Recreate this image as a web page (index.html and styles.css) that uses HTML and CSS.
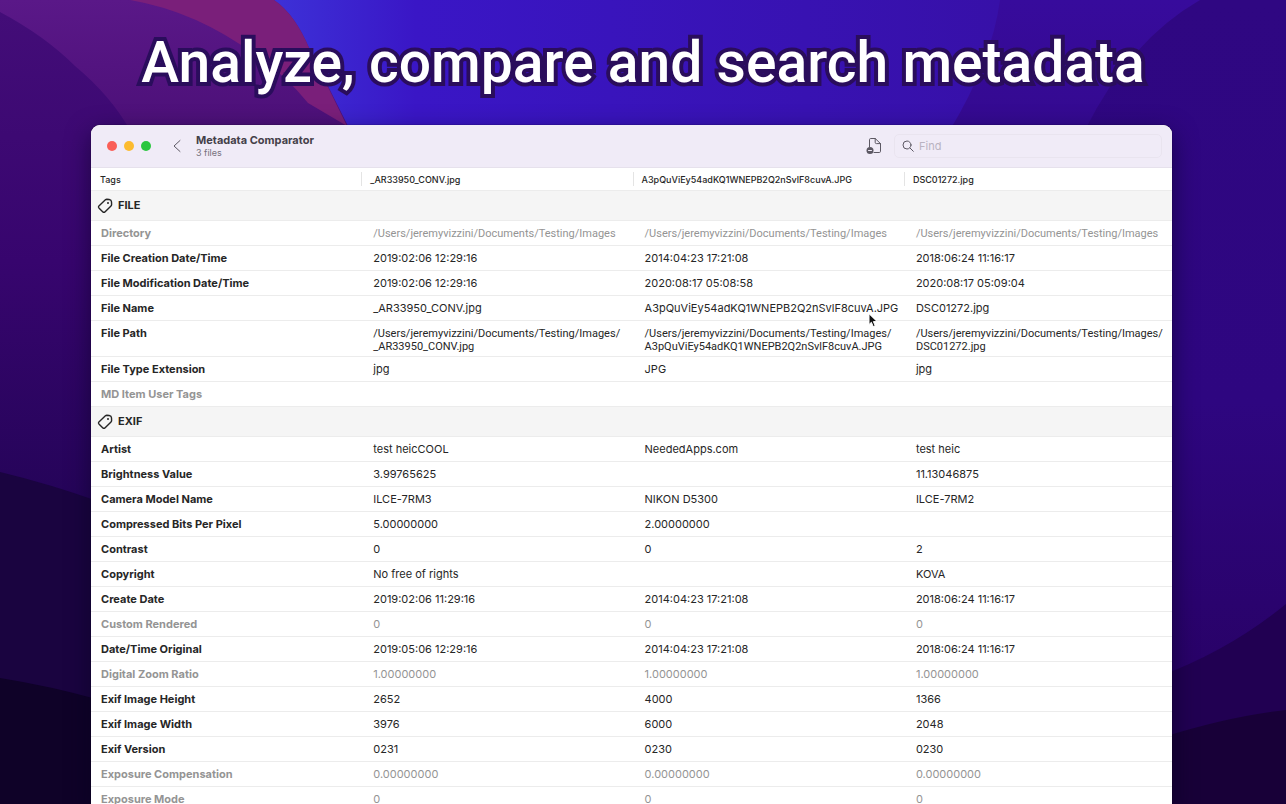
FILE: index.html
```
<!DOCTYPE html>
<html lang="en">

<head>
    <meta charset="UTF-8">
    <title>Metadata Comparator</title>
    <link rel="stylesheet" href="styles.css">
</head>

<body>
    <svg class="wallpaper" viewBox="0 0 1286 804" preserveAspectRatio="none" aria-hidden="true">
        <defs>
            <linearGradient id="base" x1="0" y1="0" x2="0" y2="1">
                <stop offset="0" stop-color="#370b9c" />
                <stop offset="0.4" stop-color="#30087e" />
                <stop offset="0.8" stop-color="#25005a" />
                <stop offset="1" stop-color="#1a0040" />
            </linearGradient>
            <linearGradient id="blue" x1="0" y1="0" x2="1" y2="0">
                <stop offset="0" stop-color="#3d32d8" />
                <stop offset="0.2" stop-color="#3a16c6" />
                <stop offset="1" stop-color="#3710a8" />
            </linearGradient>
            <linearGradient id="purple" x1="0" y1="0" x2="0" y2="1">
                <stop offset="0" stop-color="#5a1888" />
                <stop offset="0.25" stop-color="#4c1078" />
                <stop offset="1" stop-color="#240458" />
            </linearGradient>
            <linearGradient id="left" x1="0" y1="0" x2="0" y2="1">
                <stop offset="0" stop-color="#430d78" />
                <stop offset="0.5" stop-color="#37056e" />
                <stop offset="1" stop-color="#240458" />
            </linearGradient>
            <linearGradient id="far" x1="0" y1="0" x2="0" y2="1">
                <stop offset="0" stop-color="#2f0782" />
                <stop offset="0.5" stop-color="#2e0680" />
                <stop offset="1" stop-color="#26005c" />
            </linearGradient>
        </defs>
        <rect width="1286" height="804" fill="url(#base)" />
        <path d="M270 0H1000Q992 60 950 130H340Z" fill="url(#blue)" />
        <path d="M1200 0Q1130 40 1085 130V804H1286V0Z" fill="url(#far)" />
        <path d="M0 0H274Q295 14 310 50L350 130V520H0Z" fill="url(#purple)" />
        <path d="M130 0H274Q295 14 310 50L347 126L308 103Q285 75 262 60Q200 12 130 0Z" fill="#7a1f7a" />
        <path d="M0 12Q45 36 75 66Q110 95 130 130V510H0Z" fill="url(#left)" />
        <path d="M0 472Q50 484 100 502V804H0Z" fill="#1a0440" />
        <path d="M0 678Q50 686 100 700V804H0Z" fill="#0f0228" />
        <path d="M1286 604Q1230 650 1160 676V804H1286Z" fill="#210052" />
        <path d="M1286 710Q1230 716 1160 738V804H1286Z" fill="#180038" />
    </svg>

    <h1 class="headline">Analyze, compare and search metadata</h1>

    <main class="window">
        <header class="toolbar">
            <div class="lights">
                <button class="light red" aria-label="Close"></button>
                <button class="light yellow" aria-label="Minimize"></button>
                <button class="light green" aria-label="Zoom"></button>
            </div>
            <button class="icon-button" aria-label="Back">
                <svg width="10" height="14" viewBox="0 0 10 14"><path d="M8 1.5L2 7l6 5.5" /></svg>
            </button>
            <div class="titles">
                <h2>Metadata Comparator</h2>
                <p>3 files</p>
            </div>
            <button class="icon-button" aria-label="Hide identical tags">
                <svg width="16" height="18" viewBox="0 0 16 18">
                    <path d="M3.5 10V2.7Q3.5 1.5 4.7 1.5H9.2L14.5 6.6V14.3Q14.5 15.5 13.3 15.5H8M9.2 1.5V5.4Q9.2 6.6 10.4 6.6H14.5" />
                    <circle class="dot" cx="4" cy="13.5" r="3.5" />
                    <path class="minus" d="M2.5 13.5h3" />
                </svg>
            </button>
            <label class="search">
                <svg width="12" height="12" viewBox="0 0 12 12"><circle cx="5" cy="5" r="4" /><path d="M8 8l3.3 3.3" /></svg>
                <input type="search" placeholder="Find" aria-label="Find">
            </label>
        </header>

        <table class="tags">
            <colgroup>
                <col class="col-tag">
                <col class="col-file">
                <col class="col-file">
                <col>
            </colgroup>
            <thead>
                <tr>
                    <th scope="col">Tags</th>
                    <th scope="col">_AR33950_CONV.jpg</th>
                    <th scope="col">A3pQuViEy54adKQ1WNEPB2Q2nSvlF8cuvA.JPG</th>
                    <th scope="col">DSC01272.jpg</th>
                </tr>
            </thead>
            <tbody>
                <tr class="group">
                    <th colspan="4" scope="rowgroup">
                        <div class="group-name">
                            <svg width="16" height="16" viewBox="0 0 16 16"><path d="M8.4 1.8Q9 1.3 9.8 1.3L12.2 1.5Q14.4 1.8 14.5 3.8L14.6 6.4Q14.6 7.3 14 7.9L7.9 13.9Q6.9 14.8 5.9 13.9L1.9 9.9Q1 8.9 1.9 7.9Z" /><circle class="hole" cx="11" cy="4.9" r="1" /></svg>
                            FILE
                        </div>
                    </th>
                </tr>
                <tr class="same path"><th scope="row">Directory</th><td>/Users/jeremyvizzini/Documents/Testing/Images</td><td>/Users/jeremyvizzini/Documents/Testing/Images</td><td>/Users/jeremyvizzini/Documents/Testing/Images</td></tr>
                <tr><th scope="row">File Creation Date/Time</th><td>2019:02:06 12:29:16</td><td>2014:04:23 17:21:08</td><td>2018:06:24 11:16:17</td></tr>
                <tr><th scope="row">File Modification Date/Time</th><td>2019:02:06 12:29:16</td><td>2020:08:17 05:08:58</td><td>2020:08:17 05:09:04</td></tr>
                <tr><th scope="row">File Name</th><td>_AR33950_CONV.jpg</td><td>A3pQuViEy54adKQ1WNEPB2Q2nSvlF8cuvA.JPG</td><td>DSC01272.jpg</td></tr>
                <tr class="path"><th scope="row">File Path</th><td>/Users/jeremyvizzini/Documents/Testing/Images/<br>_AR33950_CONV.jpg</td><td>/Users/jeremyvizzini/Documents/Testing/Images/<br>A3pQuViEy54adKQ1WNEPB2Q2nSvlF8cuvA.JPG</td><td>/Users/jeremyvizzini/Documents/Testing/Images/<br>DSC01272.jpg</td></tr>
                <tr><th scope="row">File Type Extension</th><td>jpg</td><td>JPG</td><td>jpg</td></tr>
                <tr class="same"><th scope="row">MD Item User Tags</th><td></td><td></td><td></td></tr>
            </tbody>
            <tbody>
                <tr class="group">
                    <th colspan="4" scope="rowgroup">
                        <div class="group-name">
                            <svg width="16" height="16" viewBox="0 0 16 16"><path d="M8.4 1.8Q9 1.3 9.8 1.3L12.2 1.5Q14.4 1.8 14.5 3.8L14.6 6.4Q14.6 7.3 14 7.9L7.9 13.9Q6.9 14.8 5.9 13.9L1.9 9.9Q1 8.9 1.9 7.9Z" /><circle class="hole" cx="11" cy="4.9" r="1" /></svg>
                            EXIF
                        </div>
                    </th>
                </tr>
                <tr><th scope="row">Artist</th><td>test heicCOOL</td><td>NeededApps.com</td><td>test heic</td></tr>
                <tr><th scope="row">Brightness Value</th><td>3.99765625</td><td></td><td>11.13046875</td></tr>
                <tr><th scope="row">Camera Model Name</th><td>ILCE-7RM3</td><td>NIKON D5300</td><td>ILCE-7RM2</td></tr>
                <tr><th scope="row">Compressed Bits Per Pixel</th><td>5.00000000</td><td>2.00000000</td><td></td></tr>
                <tr><th scope="row">Contrast</th><td>0</td><td>0</td><td>2</td></tr>
                <tr><th scope="row">Copyright</th><td>No free of rights</td><td></td><td>KOVA</td></tr>
                <tr><th scope="row">Create Date</th><td>2019:02:06 11:29:16</td><td>2014:04:23 17:21:08</td><td>2018:06:24 11:16:17</td></tr>
                <tr class="same"><th scope="row">Custom Rendered</th><td>0</td><td>0</td><td>0</td></tr>
                <tr><th scope="row">Date/Time Original</th><td>2019:05:06 12:29:16</td><td>2014:04:23 17:21:08</td><td>2018:06:24 11:16:17</td></tr>
                <tr class="same"><th scope="row">Digital Zoom Ratio</th><td>1.00000000</td><td>1.00000000</td><td>1.00000000</td></tr>
                <tr><th scope="row">Exif Image Height</th><td>2652</td><td>4000</td><td>1366</td></tr>
                <tr><th scope="row">Exif Image Width</th><td>3976</td><td>6000</td><td>2048</td></tr>
                <tr><th scope="row">Exif Version</th><td>0231</td><td>0230</td><td>0230</td></tr>
                <tr class="same"><th scope="row">Exposure Compensation</th><td>0.00000000</td><td>0.00000000</td><td>0.00000000</td></tr>
                <tr class="same"><th scope="row">Exposure Mode</th><td>0</td><td>0</td><td>0</td></tr>
            </tbody>
        </table>
    </main>

    <svg class="cursor" width="10" height="15" viewBox="0 0 10 15" aria-hidden="true">
        <path d="M1 1V11.5L3.4 9.3L5.2 13.6L7.2 12.7L5.4 8.6H8.8Z" />
    </svg>
</body>

</html>
```
FILE: styles.css
```
* {
    box-sizing: border-box;
}

body {
    margin: 0;
    height: 100vh;
    overflow: hidden;
    background: #2a0670;
    color: #262626;
    font-family: Inter, 'Liberation Sans', sans-serif;
    font-size: 11px;
    line-height: 13px;
    position: relative;
}

svg {
    fill: none;
    stroke: currentColor;
    stroke-linecap: round;
    stroke-linejoin: round;
    flex: none;
}

.wallpaper {
    position: absolute;
    inset: 0;
    width: 100%;
    height: 100%;
    stroke: none;
    z-index: -1;
}

.headline {
    margin: 0;
    padding-top: 25px;
    height: 125px;
    text-align: center;
    white-space: nowrap;
    font-family: Roboto, sans-serif;
    font-size: 57px;
    line-height: 76px;
    font-weight: 500;
    color: #fff;
    -webkit-text-stroke: 8px #2a0d5c;
    paint-order: stroke fill;
}

.window {
    margin: 0 114px 0 91px;
    background: #fff;
    border-radius: 9px 9px 0 0;
    overflow: hidden;
    box-shadow: 0 8px 24px rgba(5, 0, 30, 0.55), 0 0 1px #000;
}

.toolbar {
    display: flex;
    align-items: center;
    height: 43px;
    padding: 0 10px 0 16px;
    background: #f0ebf7;
    border-bottom: 1px solid #e6e1ec;
    color: #5c5863;
}

button {
    border: 0;
    padding: 0;
    background: none;
    color: inherit;
    font: inherit;
}

.lights {
    display: flex;
    gap: 7px;
    margin-right: 21px;
}

.light {
    width: 10px;
    height: 10px;
    border-radius: 50%;
}

.red {
    background: #fa5e57;
}

.yellow {
    background: #fcbb2f;
}

.green {
    background: #2ac63f;
}

.icon-button {
    display: flex;
}

.titles {
    flex: 1;
    margin-left: 14px;
}

.titles h2 {
    margin: 0;
    font-size: 11px;
    line-height: 13px;
    font-weight: 700;
    color: #444049;
}

.titles p {
    margin: 0;
    font-size: 9px;
    line-height: 11px;
    color: #77727d;
}

.dot {
    fill: #5c5863;
    stroke: none;
}

.minus {
    stroke: #f0ebf7;
}

.search {
    display: flex;
    align-items: center;
    gap: 5px;
    width: 268px;
    height: 24px;
    margin-left: 12px;
    padding: 0 7px;
    border: 1px solid #e9e4ef;
    border-radius: 5px;
}

.search input {
    flex: 1;
    min-width: 0;
    border: 0;
    padding: 0;
    outline: 0;
    background: none;
    font: inherit;
}

.search input::placeholder {
    color: #b9b3c1;
}

.tags {
    width: 100%;
    table-layout: fixed;
    border-collapse: separate;
    border-spacing: 0;
}

.col-tag {
    width: 25%;
}

.col-file {
    width: 25.1%;
}

th,
td {
    height: 25px;
    padding: 6px 0 3px 12px;
    border-bottom: 1px solid #ececec;
    text-align: left;
    vertical-align: top;
    white-space: nowrap;
}

tbody th {
    padding-left: 10px;
    font-weight: 700;
}

thead th {
    height: 23px;
    padding: 0 9px;
    font-size: 9px;
    font-weight: 500;
    vertical-align: middle;
    background: linear-gradient(#e4e4e4, #e4e4e4) left / 1px 14px no-repeat;
}

thead th:first-child {
    background: none;
}

.group th {
    height: 30px;
    padding: 0 6px;
    background: #f5f5f5;
    vertical-align: middle;
}

.group-name {
    display: flex;
    align-items: center;
    gap: 5px;
}

.group-name svg {
    stroke-width: 1.4;
}

.hole {
    fill: currentColor;
    stroke: none;
}

/* long paths need the narrower face */
.path td {
    font-family: Roboto, sans-serif;
}

.same {
    color: #949494;
}

.cursor {
    position: absolute;
    left: 868px;
    top: 313px;
    stroke: #fff;
    fill: #111;
}
```
